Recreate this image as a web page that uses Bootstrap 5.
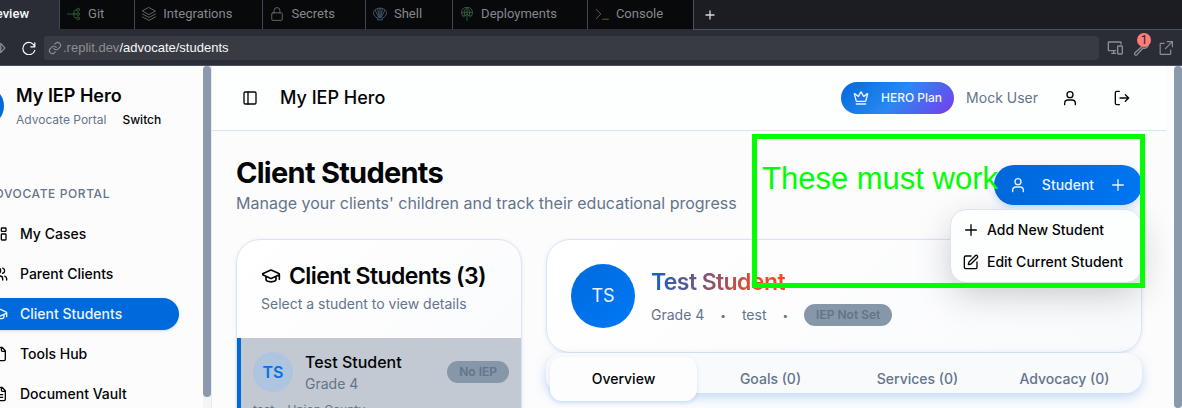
<!DOCTYPE html>
<html lang="en">
<head>
<meta charset="utf-8">
<meta name="viewport" content="width=device-width, initial-scale=1">
<title>My IEP Hero - Client Students</title>
<link href="https://cdn.jsdelivr.net/npm/bootstrap@5.3.0/dist/css/bootstrap.min.css" rel="stylesheet">
<style>
  :root { --blue: #006adc; --slate: #64748b; --line: #dbe4ee; --steel: #8a99ab; }
  body { font-family: Inter, "Liberation Sans", sans-serif; font-size: 14px; line-height: 20px; color: #020406; background: #fcfcfd; }
  svg { fill: none; stroke: currentColor; stroke-width: 2; stroke-linecap: round; stroke-linejoin: round; flex: none; }
  a { color: inherit; text-decoration: none; }
  .s10 { width: 10px; height: 10px; } .s14 { width: 14px; height: 14px; } .s16 { width: 16px; height: 16px; } .s20 { width: 20px; height: 20px; }
  .slate { color: var(--slate); }
  .icon-btn { background: none; border: 0; padding: 0; color: inherit; display: inline-flex; align-items: center; justify-content: center; }
  .gap-12 { gap: 12px; }

  /* workspace chrome */
  .chrome { font-family: Roboto, "Liberation Sans", sans-serif; font-size: 13px; background: #2b2d36; color: #8b8e93; }
  .strip { background: #1c1d22; height: 30px; }
  .ws-tab { background: #08090b; border: 0; border-left: 1px solid #3f4659; border-bottom: 1px solid #2b2d36; color: #85878b; padding: 0 30px 2px 7px; gap: 7px; display: flex; align-items: center; height: 30px; }
  .ws-tab svg { stroke-width: 1.5; opacity: .8; }
  .ws-tab.first { background: #2b2d36; color: #f5f9fc; border: 0; padding-left: 0; margin-left: -17px; font-weight: 500; }
  .ws-add { border-left: 1px solid #4a5168; border-bottom: 1px solid #4a5168; color: #d5d8dc; padding-left: 11px; }
  .bar { height: 36px; border-bottom: 1px solid #4a5062; padding-right: 9px; }
  .bar-tools { gap: 10px; padding-left: 8px; }
  .forward { margin-left: -8px; }
  .address { font-family: "Liberation Sans", sans-serif; background: #393b43; border-radius: 4px; height: 24px; padding: 0 4px; gap: 1px; }
  .address b { color: #f5f9fc; font-weight: 400; }
  .alert-dot { position: absolute; top: -7px; left: 4px; width: 14px; height: 14px; border-radius: 7px; background: #ff7d78; color: #222; font-size: 12px; line-height: 14px; text-align: center; }

  /* sidebar */
  .side { width: 255px; margin-left: -52px; padding: 0 24px 0 16px; }
  .logo { width: 40px; height: 40px; background: var(--blue); }
  .brand { font-size: 18px; line-height: 28px; font-weight: 600; }
  .small-line { font-size: 12px; }
  .side-label { font-size: 12px; line-height: 16px; font-weight: 500; letter-spacing: .05em; padding-left: 22px; margin: 56px 0 16px; }
  .side-nav { gap: 8px; }
  .side-nav a { height: 32px; padding-left: 28px; gap: 12px; border-radius: 16px; font-weight: 500; }
  .side-nav a.current { background: var(--blue); color: #eef5fd; box-shadow: 0 1px 3px rgba(0,90,200,.2); }
  .rail { width: 9px; border-right: 1px solid #e7ebf0; background: #f4f5f7; }
  .rail div { background: var(--steel); border-radius: 4px; width: 8px; }
  .rail .short { height: 331px; }
  .rail-right { border: 0; width: 8px; }

  /* content */
  .topbar { height: 65px; background: #fdfefe; border-bottom: 1px solid var(--line); padding: 0 24px; gap: 12px; }
  .panel-toggle { width: 28px; }
  .top-title { font-size: 18px; line-height: 28px; font-weight: 500; }
  .plan { height: 32px; border: 0; border-radius: 16px; color: #eef5ff; font-size: 12px; font-weight: 500; padding: 0 12px; gap: 12px; background: linear-gradient(135deg, #006adc, #2b88f0 50%, #7c3aed); }
  .w40 { width: 40px; height: 40px; }
  .page { padding: 24px; }
  h1 { font-size: 29px; line-height: 36px; font-weight: 700; letter-spacing: -.025em; margin: 0; }
  .lead-in { font-size: 16px; line-height: 24px; color: var(--slate); margin: 0; }
  .add { width: 148px; height: 40px; border: 0; border-radius: 20px; color: #e9f3ff; font-weight: 500; background: linear-gradient(135deg, #0066d8, #0078f5); padding: 0 16px; box-shadow: 0 3px 8px rgba(0,106,220,.2); }
  .pop { position: absolute; top: 44px; right: 0; width: 192px; z-index: 5; background: #fdfefe; border: 1px solid var(--line); border-radius: 16px; padding: 4px; box-shadow: 0 12px 36px -4px rgba(20,24,32,.26); }
  .pop button { height: 32px; width: 100%; padding: 0 8px; gap: 8px; justify-content: flex-start; font-weight: 500; }
  .panel { border: 1px solid var(--line); border-radius: 24px; background: linear-gradient(135deg, #fff, #f9fafc); box-shadow: 0 1px 4px rgba(0,106,220,.12); overflow: hidden; }
  h2 { font-size: 23px; line-height: 24px; font-weight: 600; letter-spacing: -.025em; margin: 0; }
  .under { margin-top: 6px; }
  .picked { background: #c2c9d2; border-left: 4px solid var(--blue); padding: 12px; }
  .tag { height: 22px; border-radius: 11px; background: #8797aa; color: #637489; font-size: 12px; font-weight: 600; padding: 0 12px; display: inline-flex; align-items: center; }
  .face-sm { width: 40px; height: 40px; background: #aec4df; color: #0870e6; font-size: 16px; font-weight: 600; }
  .face-lg { width: 64px; height: 64px; background: linear-gradient(135deg, #006adc, #0079f7); color: #eaf3fd; font-size: 18px; }
  .grad { line-height: 32px; background: linear-gradient(90deg, #0f62c8, #f04a23 80%); -webkit-background-clip: text; background-clip: text; color: transparent; }
  .sep { font-size: 10px; }
  .tabs { height: 40px; padding: 4px; border-radius: 16px; background: #f9fafc; box-shadow: 0 4px 12px rgba(0,106,220,.24); }
  .tabs button { flex: 1 1 0; height: 44px; border-radius: 12px; font-weight: 500; color: var(--slate); }
  .tabs .on { background: #fdfdfe; color: #020406; box-shadow: 0 2px 4px rgba(0,106,220,.16); }

  /* review mark drawn over the page */
  .mark-box { position: absolute; z-index: 9; right: -3px; top: -21px; width: 393px; height: 154px; border: 5px solid #0f0; color: #0f0; font: 31px/36px "Liberation Sans", sans-serif; padding: 22px 5px; pointer-events: none; white-space: nowrap; }
</style>
</head>
<body>
<div class="vh-100 d-flex flex-column overflow-hidden">
  <header class="chrome">
    <div class="strip d-flex">
      <button class="ws-tab first">Preview</button>
      <button class="ws-tab"><svg class="s14" viewBox="0 0 24 24" style="color:#3f7a4c"><path d="M1 12h11M12 12V8q0-3 4-3M12 12v4q0 3 4 3M12 12h4"/><circle cx="19" cy="4.500" r="2.500"/><circle cx="19" cy="12" r="2.500"/><circle cx="19" cy="19.500" r="2.500"/></svg>Git</button>
      <button class="ws-tab"><svg class="s14" viewBox="0 0 24 24"><path d="m12 1 11 6-11 6L1 7zM1 12l11 6 11-6M1 17l11 6 11-6"/></svg>Integrations</button>
      <button class="ws-tab"><svg class="s14" viewBox="0 0 24 24"><rect x="3" y="10" width="18" height="13" rx="2"/><path d="M7 10V6a5 5 0 0 1 10 0v4"/></svg>Secrets</button>
      <button class="ws-tab"><svg class="s14" viewBox="0 0 24 24" style="color:#5e7590"><path d="M8 19C3 17 1 14 1 10c0-5 6-8 11-8s11 3 11 8c0 4-2 7-7 9v3H8zM10 18 4 6M11 18 8 3M12 18V2M13 18l3-15M14 18l6-12"/></svg>Shell</button>
      <button class="ws-tab"><svg class="s14" viewBox="0 0 24 24" style="color:#487a53"><path d="M6 17a9.500 9.500 0 1 1 12 0M3 9h18M8 14C6 8 9 2 12 1c3 1 6 7 4 13M12 1v22M8 16l4-4 4 4M6 14h2M16 14h2"/></svg>Deployments</button>
      <button class="ws-tab"><svg class="s14" viewBox="0 0 24 24" style="color:#8a7b55"><path d="m2 4 8 8-8 8M13 21h10"/></svg>Console</button>
      <div class="ws-add flex-fill d-flex align-items-center"><button class="icon-btn" aria-label="New tab"><svg class="s10" viewBox="0 0 10 10"><path d="M5 1v8M1 5h8" stroke-width="1.300"/></svg></button></div>
    </div>
    <div class="bar d-flex align-items-center">
      <button class="icon-btn forward" aria-label="Forward"><svg class="s14" viewBox="0 0 24 24"><path d="M2 12h14M15 4l7 8-7 8z"/></svg></button>
      <button class="icon-btn text-white ms-3" aria-label="Reload"><svg class="s14" viewBox="0 0 24 24"><path d="M22 3v7h-7M22 10A10.500 10.500 0 1 0 22 16"/></svg></button>
      <div class="address flex-fill d-flex align-items-center ms-2"><svg class="s14" viewBox="0 0 24 24"><path d="M10 13a5 5 0 0 0 7.500.5l3-3a5 5 0 0 0-7-7l-2 2M14 11a5 5 0 0 0-7.500-.5l-3 3a5 5 0 0 0 7 7l2-2"/></svg><span>.replit.dev<b>/advocate/students</b></span></div>
      <div class="bar-tools d-flex align-items-center">
        <button class="icon-btn" aria-label="Devices"><svg class="s16" viewBox="0 0 24 24" stroke-width="1.500"><path d="M13 16H3a1 1 0 0 1-1-1V4a1 1 0 0 1 1-1h17a1 1 0 0 1 1 1v2M7 20h6M10 16v4"/><rect x="16" y="9" width="7" height="12" rx="1"/></svg></button>
        <button class="icon-btn position-relative" aria-label="Developer tools, 1 issue"><svg class="s16" viewBox="0 0 24 24"><path d="M13 10 3 19a2 2 0 0 0 3 3l9-10M13 10a6 6 0 0 1 7-8l-3 4 2 3 4-2a6 6 0 0 1-8 5"/></svg><span class="alert-dot">1</span></button>
        <button class="icon-btn" aria-label="Open in new window"><svg class="s14" viewBox="0 0 24 24"><path d="M9 4H3a1 1 0 0 0-1 1v17a1 1 0 0 0 1 1h16a1 1 0 0 0 1-1v-7M14 1h9v9M23 1 11 13"/></svg></button>
      </div>
    </div>
  </header>

  <div class="d-flex flex-fill overflow-hidden">
    <aside class="side flex-shrink-0">
      <div class="d-flex align-items-center pt-3 gap-12">
        <div class="logo rounded-circle flex-shrink-0"></div>
        <div class="text-nowrap">
          <div class="brand">My IEP Hero</div>
          <div class="small-line"><span class="slate">Advocate Portal</span><a href="#" class="ms-3 fw-medium">Switch</a></div>
        </div>
      </div>
      <div class="side-label slate">ADVOCATE PORTAL</div>
      <nav class="side-nav d-flex flex-column">
        <a href="#" class="d-flex align-items-center"><svg class="s16" viewBox="0 0 24 24"><rect x="3" y="3" width="7" height="9" rx="1"/><rect x="14" y="3" width="7" height="5" rx="1"/><rect x="14" y="12" width="7" height="9" rx="1"/><rect x="3" y="16" width="7" height="5" rx="1"/></svg>My Cases</a>
        <a href="#" class="d-flex align-items-center"><svg class="s16" viewBox="0 0 24 24"><path d="M16 21v-2a4 4 0 0 0-4-4H6a4 4 0 0 0-4 4v2M22 21v-2a4 4 0 0 0-3-3.870M16 3.130a4 4 0 0 1 0 7.750"/><circle cx="9" cy="7" r="4"/></svg>Parent Clients</a>
        <a href="#" class="current d-flex align-items-center"><svg class="s16" viewBox="0 0 24 24"><path d="M21.420 10.920a1 1 0 0 0-.02-1.840L12.830 5.180a2 2 0 0 0-1.660 0L2.600 9.080a1 1 0 0 0 0 1.830l8.570 3.910a2 2 0 0 0 1.660 0zM22 10v6M6 12.500V16a6 3 0 0 0 12 0v-3.500"/></svg>Client Students</a>
        <a href="#" class="d-flex align-items-center"><svg class="s16" viewBox="0 0 24 24"><path d="M15 2H6a2 2 0 0 0-2 2v16a2 2 0 0 0 2 2h12a2 2 0 0 0 2-2V7zM14 2v4a2 2 0 0 0 2 2h4"/></svg>Tools Hub</a>
        <a href="#" class="d-flex align-items-center"><svg class="s16" viewBox="0 0 24 24"><path d="M15 2H6a2 2 0 0 0-2 2v16a2 2 0 0 0 2 2h12a2 2 0 0 0 2-2V7zM14 2v4a2 2 0 0 0 2 2h4M10 9H8M16 13H8M16 17H8"/></svg>Document Vault</a>
      </nav>
    </aside>
    <div class="rail flex-shrink-0"><div class="short"></div></div>

    <div class="flex-fill overflow-hidden d-flex">
      <main class="flex-fill">
        <div class="topbar d-flex align-items-center">
          <button class="icon-btn panel-toggle" aria-label="Toggle sidebar"><svg class="s16" viewBox="0 0 24 24"><rect x="3" y="3" width="18" height="18" rx="2"/><path d="M9 3v18"/></svg></button>
          <div class="top-title me-auto ms-1">My IEP Hero</div>
          <button class="plan d-flex align-items-center"><svg class="s16" viewBox="0 0 24 24"><path d="M11.560 3.270a.5.5 0 0 1 .88 0L15.390 8.870a1 1 0 0 0 1.520.3L21.180 5.500a.5.5 0 0 1 .8.520l-2.830 10.250a1 1 0 0 1-.96.730H5.810a1 1 0 0 1-.96-.730L2.020 6.020a.5.5 0 0 1 .8-.520l4.270 3.660a1 1 0 0 0 1.520-.290zM5 21h14"/></svg>HERO Plan</button>
          <span class="slate">Mock User</span>
          <button class="icon-btn w40" aria-label="Profile"><svg class="s16" viewBox="0 0 24 24"><circle cx="12" cy="7" r="4.500"/><path d="M4 22v-2a5 5 0 0 1 5-5h6a5 5 0 0 1 5 5v2"/></svg></button>
          <button class="icon-btn w40" aria-label="Log out"><svg class="s16" viewBox="0 0 24 24"><path d="M8 2H4a2 2 0 0 0-2 2v16a2 2 0 0 0 2 2h4M17 17l5-5-5-5M22 12H9"/></svg></button>
        </div>

        <div class="page">
          <div class="position-relative d-flex align-items-center justify-content-between mb-4">
            <div>
              <h1>Client Students</h1>
              <p class="lead-in">Manage your clients' children and track their educational progress</p>
            </div>
            <div class="position-relative">
              <button class="add d-flex align-items-center justify-content-between" aria-expanded="true"><svg class="s16" viewBox="0 0 24 24"><circle cx="12" cy="7" r="4.500"/><path d="M4 22v-2a5 5 0 0 1 5-5h6a5 5 0 0 1 5 5v2"/></svg><span>Student</span><svg class="s16" viewBox="0 0 24 24"><path d="M4 12h16M12 4v16"/></svg></button>
              <div class="pop">
                <button class="icon-btn"><svg class="s16" viewBox="0 0 24 24"><path d="M4 12h16M12 4v16"/></svg>Add New Student</button>
                <button class="icon-btn"><svg class="s16" viewBox="0 0 24 24"><path d="M12 3H4a2 2 0 0 0-2 2v15a2 2 0 0 0 2 2h15a2 2 0 0 0 2-2v-8M18.400 2.600a2 2 0 0 1 3 3L12 15l-4 1 1-4z"/></svg>Edit Current Student</button>
              </div>
            </div>
            <div class="mark-box">These must work</div>
          </div>

          <div class="row">
            <div class="col-4">
              <section class="panel">
                <div class="p-4">
                  <h2 class="d-flex align-items-center gap-2 text-nowrap"><svg class="s20" viewBox="0 0 24 24"><path d="M21.420 10.920a1 1 0 0 0-.02-1.840L12.830 5.180a2 2 0 0 0-1.660 0L2.600 9.080a1 1 0 0 0 0 1.830l8.570 3.910a2 2 0 0 0 1.660 0zM22 10v6M6 12.500V16a6 3 0 0 0 12 0v-3.500"/></svg>Client Students (3)</h2>
                  <div class="slate under">Select a student to view details</div>
                </div>
                <div class="picked">
                  <div class="d-flex align-items-center gap-12">
                    <div class="face-sm rounded-circle d-flex align-items-center justify-content-center">TS</div>
                    <div class="me-auto"><div class="fs-6 fw-medium lh-base">Test Student</div><div class="slate">Grade 4</div></div>
                    <span class="tag">No IEP</span>
                  </div>
                  <div class="slate under small-line">test • Union County</div>
                </div>
              </section>
            </div>
            <div class="col-8">
              <section class="panel p-4 d-flex align-items-center gap-3">
                <div class="face-lg rounded-circle d-flex align-items-center justify-content-center">TS</div>
                <div>
                  <h2 class="grad d-inline-block">Test Student</h2>
                  <div class="slate d-flex align-items-center gap-3 under"><span>Grade 4</span><span class="sep">•</span><span>test</span><span class="sep">•</span><span class="tag">IEP Not Set</span></div>
                </div>
              </section>
              <div class="tabs d-flex" role="tablist">
                <button class="icon-btn on" role="tab" aria-selected="true">Overview</button>
                <button class="icon-btn" role="tab">Goals (0)</button>
                <button class="icon-btn" role="tab">Services (0)</button>
                <button class="icon-btn" role="tab">Advocacy (0)</button>
              </div>
            </div>
          </div>
        </div>
      </main>
      <div class="flex-shrink-0 ps-2"><div class="rail rail-right h-100"><div class="h-100"></div></div></div>
    </div>
  </div>
</div>
<script src="https://cdn.jsdelivr.net/npm/bootstrap@5.3.0/dist/js/bootstrap.bundle.min.js"></script>
</body>
</html>
